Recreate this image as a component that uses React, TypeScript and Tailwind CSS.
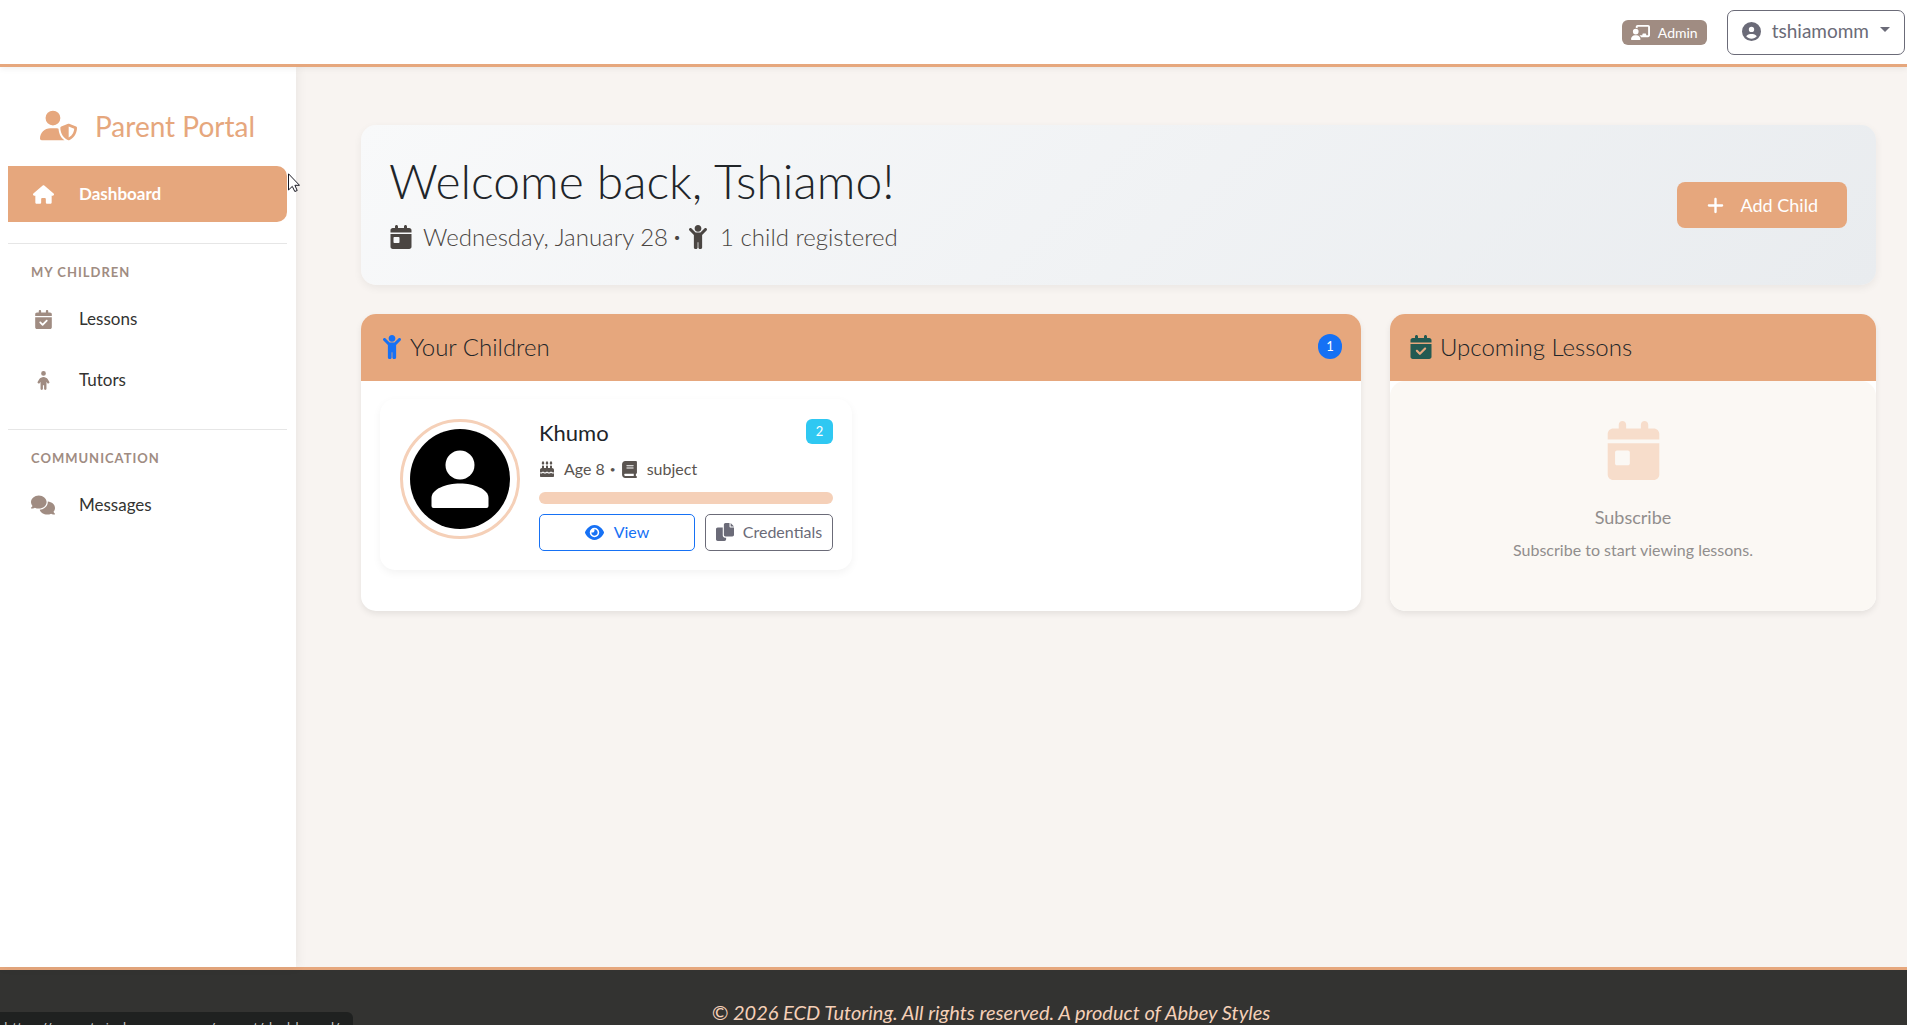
import type { ReactNode } from "react";
import { FaChild as FaChildArmsUp } from "react-icons/fa";
import {
  FaBook,
  FaCakeCandles,
  FaCalendarCheck,
  FaCalendarDay,
  FaChalkboardUser,
  FaChild,
  FaCircleUser,
  FaComments,
  FaEye,
  FaHouse,
  FaPlus,
  FaUserShield,
} from "react-icons/fa6";

interface NavItemProps {
  icon: ReactNode;
  label: string;
  active?: boolean;
}

function NavItem({ icon, label, active = false }: NavItemProps) {
  return (
    <a
      href="#"
      className={`mb-[5px] flex h-14 items-center rounded-r-[10px] pl-[23px] text-[17px] ${
        active ? "bg-[#e6a77d] font-bold text-white" : "text-[#333331]"
      }`}
    >
      <span className={`flex w-6 justify-center ${active ? "text-white" : "text-[#a08c82]"}`}>
        {icon}
      </span>
      <span className="ml-6">{label}</span>
    </a>
  );
}

function NavSection({ title, children }: { title: string; children: ReactNode }) {
  return (
    <section className="mt-[21px] border-t border-[#e6e6e6]">
      <h2 className="flex h-[47px] items-center pt-[10px] pl-[23px] text-[13px] font-bold tracking-[1px] text-[#a08c82]">
        {title}
      </h2>
      {children}
    </section>
  );
}

function Sidebar() {
  return (
    <aside className="relative z-10 w-[296px] shrink-0 bg-white px-2 shadow-[2px_0_10px_rgba(0,0,0,0.06)]">
      <div className="flex h-[99px] items-center gap-[18px] pt-[18px] pl-8 text-[#e6a77d]">
        <FaUserShield className="text-[37px]" />
        <h1 className="text-[28px]">Parent Portal</h1>
      </div>
      <nav className="pr-[1px]">
        <NavItem icon={<FaHouse className="text-[21px]" />} label="Dashboard" active />
        <NavSection title="MY CHILDREN">
          <NavItem icon={<FaCalendarCheck className="text-[19px]" />} label="Lessons" />
          <NavItem icon={<FaChild className="text-[19px]" />} label="Tutors" />
        </NavSection>
        <NavSection title="COMMUNICATION">
          <NavItem icon={<FaComments className="text-[24px]" />} label="Messages" />
        </NavSection>
      </nav>
    </aside>
  );
}

function Header() {
  return (
    <header className="relative z-20 flex h-[67px] items-center justify-end gap-5 border-b-[3px] border-[#e6a77d] bg-white pt-px pr-[2px] shadow-[0_2px_6px_rgba(0,0,0,0.06)]">
      <span className="flex h-[25px] items-center gap-2 rounded-md bg-[#a08c82] px-[9px] text-[14px] text-white">
        <FaChalkboardUser className="text-[19px]" />
        Admin
      </span>
      <button className="flex h-[45px] items-center gap-[11px] rounded-[7px] border border-[#6b6b78] px-[14px] pb-[2px] text-[19px] text-[#6b6b78]">
        <FaCircleUser />
        tshiamomm
        <span className="mb-1 border-x-5 border-t-5 border-x-transparent border-t-[#6b6b78]" />
      </button>
    </header>
  );
}

function WelcomeCard() {
  return (
    <section className="flex h-40 items-center justify-between rounded-[15px] bg-linear-135 from-[#f8f9fa] to-[#e9ecef] px-7 shadow-[0_3px_8px_rgba(0,0,0,0.06)]">
      <div>
        <h2 className="text-[48px] leading-13 font-light text-[#212529]">Welcome back, Tshiamo!</h2>
        <p className="mt-3 flex items-center text-[24px] leading-9 font-light text-[#4a4542]">
          <FaCalendarDay className="mr-[10px]" />
          Wednesday, January 28
          <span className="mx-[5px] text-[14px]">•</span>
          <FaChildArmsUp className="mr-[10px]" />
          1 child registered
        </p>
      </div>
      <button className="mr-px flex h-[46px] items-center gap-4 rounded-lg bg-[#e6a77d] px-[29px] text-[18px] text-white">
        <FaPlus className="text-[19px]" />
        Add Child
      </button>
    </section>
  );
}

function CopyIcon() {
  return (
    <svg viewBox="0 0 512 512" fill="currentColor" className="size-[18px]" aria-hidden="true">
      <path d="M384 96V0H272c-26.510 0-48 21.490-48 48v288c0 26.510 21.490 48 48 48h192c26.510 0 48-21.490 48-48V128h-96c-17.600 0-32-14.400-32-32zM416 0v96h96L416 0zM192 352V128H48c-26.510 0-48 21.490-48 48v288c0 26.510 21.490 48 48 48h192c26.510 0 48-21.490 48-48v-48h-32c-35.300 0-64-28.700-64-64z" />
    </svg>
  );
}

function ChildCard() {
  return (
    <article className="flex w-[472px] gap-[19px] rounded-[15px] p-5 pr-[19px] pb-[19px] shadow-[0_3px_8px_rgba(0,0,0,0.05)]">
      <div className="size-[120px] shrink-0 rounded-full border-3 border-[#f5d0b8] p-[7px]">
        <svg viewBox="0 0 100 100" className="size-full" role="img" aria-label="Khumo">
          <circle cx="50" cy="50" r="50" fill="#000" />
          <circle cx="50" cy="36" r="14.5" fill="#fff" />
          <path d="M21.500 77V69C21.500 60 36 54.500 50 54.500S78.500 60 78.500 69V77Q78.500 79 76.500 79H23.500Q21.500 79 21.500 77Z" fill="#fff" />
        </svg>
      </div>
      <div className="min-w-0 flex-1">
        <div className="flex items-start justify-between">
          <h4 className="text-[22px] leading-7 text-[#212529]">Khumo</h4>
          <span className="flex h-[25px] w-[27px] items-center justify-center rounded-md bg-[#2fc8f2] text-[13px] text-white">
            2
          </span>
        </div>
        <p className="mt-2 flex h-7 items-center text-[16px] text-[#5a5450]">
          <FaCakeCandles className="mr-[9px]" />
          Age 8
          <span className="mx-[5px] text-[10px]">•</span>
          <FaBook className="mr-[9px] text-[17px]" />
          subject
        </p>
        <div className="mt-[9px] h-3 rounded-md bg-[#f5d0b8]" />
        <div className="mt-[10px] flex gap-[10px]">
          <button className="flex h-[37px] flex-1 items-center justify-center gap-[10px] rounded-[5px] border border-[#1671f5] pb-px text-[16px] text-[#1671f5]">
            <FaEye className="text-[19px]" />
            View
          </button>
          <button className="flex h-[37px] w-32 items-center justify-center gap-[9px] rounded-[5px] border border-[#6b6b78] pb-px text-[16px] text-[#6b6b78]">
            <CopyIcon />
            Credentials
          </button>
        </div>
      </div>
    </article>
  );
}

function Panel({ header, children }: { header: ReactNode; children: ReactNode }) {
  return (
    <section className="flex flex-col overflow-hidden rounded-[15px] bg-white shadow-[0_3px_6px_rgba(0,0,0,0.08)]">
      <div className="flex h-[67px] shrink-0 items-center bg-[#e6a77d] px-[19px] pb-[2px]">
        {header}
      </div>
      {children}
    </section>
  );
}

export default function App() {
  return (
    <div className="relative flex h-screen flex-col overflow-hidden bg-[#f8f4f1] font-['Lato','Open_Sans',sans-serif]">
      <Header />
      <div className="flex flex-1">
        <Sidebar />
        <main className="flex-1 pt-[58px] pr-[31px] pl-[65px]">
          <WelcomeCard />
          <div className="mt-[29px] grid h-[297px] grid-cols-[1000fr_486fr] gap-[29px]">
            <Panel
              header={
                <>
                  <FaChildArmsUp className="mr-[6px] text-[24px] text-[#1671f5]" />
                  <h3 className="text-[24px] leading-8 font-light text-[#212529]">Your Children</h3>
                  <span className="ml-auto flex h-[25px] w-6 items-center justify-center rounded-full bg-[#1671f5] text-[13px] text-white">
                    1
                  </span>
                </>
              }
            >
              <div className="px-[19px] pt-[18px]">
                <ChildCard />
              </div>
            </Panel>
            <Panel
              header={
                <>
                  <FaCalendarCheck className="mr-[7px] text-[24px] text-[#235a52]" />
                  <h3 className="text-[24px] leading-8 font-light text-[#212529]">Upcoming Lessons</h3>
                </>
              }
            >
              <div className="flex flex-1 flex-col items-center rounded-[15px] bg-[#fbf8f4] pt-10 text-[#918e8d]">
                <FaCalendarDay className="text-[59px] text-[#f7ddcb]" />
                <h4 className="mt-[23px] text-[18px] leading-7">Subscribe</h4>
                <p className="mt-[7px] text-[16px] leading-6">Subscribe to start viewing lessons.</p>
              </div>
            </Panel>
          </div>
        </main>
      </div>
      <footer className="h-[58px] shrink-0 border-t-3 border-[#e6a77d] bg-[#333331] pt-[30px] pl-[75px] text-center text-[20px] leading-6 text-[#f5d0b8] italic">
        © 2026 ECD Tutoring. All rights reserved. A product of Abbey Styles
      </footer>
      {/* Link preview shown in the bottom corner */}
      <div className="absolute bottom-0 left-0 h-[13px] w-[353px] overflow-hidden rounded-tr-md bg-[#1f2120] pt-[6px] pl-1 font-['Open_Sans',sans-serif] text-[14px] leading-5 text-[#c8c8c8]">
        https://parents.indexxxxxx.com/parent/dashboard/
      </div>
      {/* Mouse pointer */}
      <svg viewBox="0 0 12 19" className="absolute top-[173px] left-[288px] z-30 h-[19px] w-3">
        <path d="M.500.800V17L4.300 13.400L6.800 18.500L9.200 17.500L6.900 12.300H11.500Z" fill="#fff" stroke="#1a1a24" />
      </svg>
    </div>
  );
}
